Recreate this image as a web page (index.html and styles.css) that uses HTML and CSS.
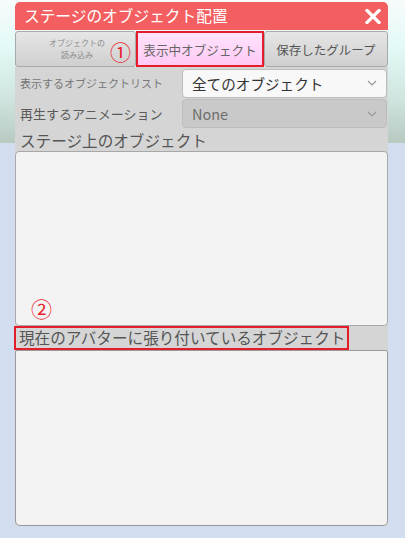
FILE: index.html
```html
<!DOCTYPE html>
<html lang="ja">
<head>
<meta charset="utf-8">
<link rel="stylesheet" href="styles.css">
</head>
<body>
<div class="panel">
  <div class="titlebar">
    <span class="title">ステージのオブジェクト配置</span>
    <svg class="close" width="16" height="15" viewBox="0 0 16 15"><path d="M2 1.5 L14 13.5 M14 1.5 L2 13.5" stroke="#fff" stroke-width="3.2" stroke-linecap="square"/></svg>
  </div>
  <div class="tabs">
    <div class="tab tab-load">
      <span class="load-text">オブジェクトの<br>読み込み</span>
      <span class="mark mark1">①</span>
    </div>
    <div class="tab tab-active">表示中オブジェクト</div>
    <div class="tab tab-saved">保存したグループ</div>
  </div>
  <div class="body">
    <div class="row">
      <span class="label label-small">表示するオブジェクトリスト</span>
      <div class="select select-white">
        <span>全てのオブジェクト</span>
        <svg class="chev" width="10" height="6" viewBox="0 0 10 6"><polyline points="1,1 5,5 9,1" fill="none" stroke="#999" stroke-width="1.2"/></svg>
      </div>
    </div>
    <div class="row">
      <span class="label">再生するアニメーション</span>
      <div class="select select-gray">
        <span>None</span>
        <svg class="chev" width="10" height="6" viewBox="0 0 10 6"><polyline points="1,1 5,5 9,1" fill="none" stroke="#999" stroke-width="1.2"/></svg>
      </div>
    </div>
    <div class="section-head">ステージ上のオブジェクト</div>
    <div class="list list-top">
      <span class="mark mark2">②</span>
    </div>
    <div class="section-head head2"><span class="redbox">現在のアバターに張り付いているオブジェクト</span></div>
    <div class="list list-bottom"></div>
  </div>
</div>
</body>
</html>
```

FILE: styles.css
```css
* { box-sizing: border-box; }
html, body { margin: 0; padding: 0; }
body {
  width: 405px;
  height: 538px;
  overflow: hidden;
  font-family: "Noto Sans CJK JP", "Noto Sans", sans-serif;
  background: linear-gradient(to bottom, #f7fbfb 0px, #e4faf8 45px, #cfe4de 100px, #b7c9c1 143px, #d2ddf0 143px, #d2ddf0 100%);
}
.panel {
  margin-left: 15px;
  width: 373px;
  padding-top: 2px;
}
.titlebar {
  height: 28px;
  background: #f35f60;
  border-radius: 5px 5px 0 0;
  display: flex;
  align-items: center;
  justify-content: space-between;
  padding: 0 7px 0 9px;
}
.title {
  color: #fff;
  font-size: 15.7px;
  line-height: 1;
}
.close { display: block; margin-top: 1px; }
.tabs {
  display: flex;
  height: 36px;
  margin-top: 1px;
}
.tab {
  height: 36px;
  display: flex;
  align-items: center;
  justify-content: center;
  background: linear-gradient(to bottom, #e6e6e6, #cfcfcf);
  border: 1px solid #a9a9a9;
  border-radius: 3px;
  color: #555;
  font-size: 12.5px;
}
.tab-load {
  width: 121px;
  position: relative;
  justify-content: flex-start;
}
.load-text {
  font-size: 8px;
  line-height: 12px;
  color: #8a8a8a;
  text-align: center;
  margin-left: 33px;
}
.mark {
  position: absolute;
  color: #e8222e;
  font-size: 21px;
  line-height: 1;
}
.mark1 { left: 94px; top: 9px; }
.tab-active {
  width: 128px;
  background: linear-gradient(to bottom, #ffe4fc, #ffc9f5);
  border: 2.5px solid #e41d2b;
  border-radius: 0;
  color: #666;
  font-size: 12.6px;
}
.tab-saved {
  width: 124px;
}
.body {
  background: #d5d5d5;
  height: 459px;
  display: flex;
  flex-direction: column;
}
.row {
  display: flex;
  align-items: center;
  height: 31px;
}
.label {
  width: 167px;
  padding-left: 5px;
  color: #5a5a5a;
  font-size: 13px;
  white-space: nowrap;
}
.label-small {
  font-size: 11px;
  color: #777;
}
.select {
  width: 205px;
  height: 29px;
  border: 1px solid #bdbdbd;
  border-radius: 4px;
  display: flex;
  align-items: center;
  justify-content: space-between;
  padding: 0 9px 0 9px;
}
.select-white {
  background: #f8f8f8;
  color: #333;
  font-size: 14.6px;
  margin-top: 1px;
}
.select-gray {
  background: #c9c9c9;
  color: #6e6e6e;
  font-size: 14.5px;
}
.chev { display: block; }
.section-head {
  height: 22px;
  padding-left: 5px;
  color: #555;
  font-size: 15.6px;
  line-height: 22px;
  white-space: nowrap;
}
.list {
  background: #f3f3f3;
  border: 1px solid #a8a8a8;
  border-radius: 4px;
}
.list-top {
  height: 175px;
  position: relative;
}
.mark2 { left: 15px; top: 146px; }
.head2 {
  height: 24px;
  padding-left: 0;
  display: flex;
  align-items: center;
}
.redbox {
  display: inline-block;
  border: 2.5px solid #e41d2b;
  height: 24px;
  line-height: 19px;
  padding: 0 2px 0 3px;
  margin-left: -1px;
  font-size: 15.6px;
  color: #555;
}
.list-bottom {
  flex: 1;
  border-radius: 2px 2px 5px 5px;
  border-color: #999;
}
```
